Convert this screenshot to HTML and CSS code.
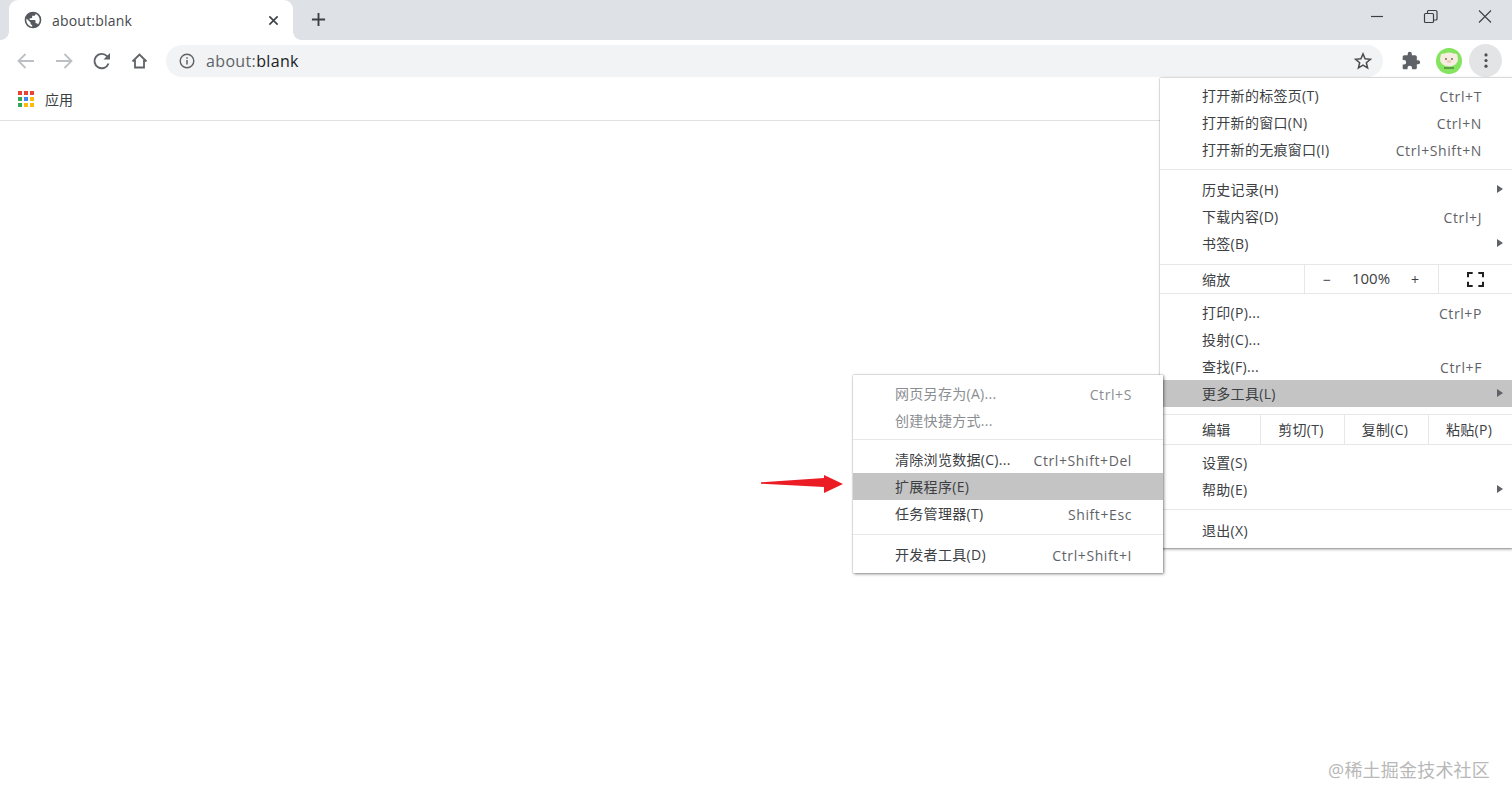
FILE: index.html
```html
<!DOCTYPE html>
<html lang="zh">
<head>
<meta charset="utf-8">
<title>about:blank</title>
<link rel="stylesheet" href="styles.css">
</head>
<body>
<div class="browser">
  <header class="tabstrip">
    <div class="tab">
      <svg class="tab-globe" viewBox="0 0 24 24"><path fill="#55585c" d="M12 2a10 10 0 1 0 0 20 10 10 0 0 0 0-20zM4 12c0-.6.1-1.200.2-1.800L9 15v1c0 1.100.9 2 2 2v2c-3.900-.5-7-3.900-7-8zm13.900 5.400c-.3-.8-1-1.400-1.900-1.400h-1v-3c0-.6-.4-1-1-1H8v-2h2c.6 0 1-.4 1-1V7h2c1.100 0 2-.9 2-2v-.4c2.900 1.200 5 4.100 5 7.400 0 2.100-.8 4-2.100 5.400z"/></svg>
      <span class="tab-title">about:blank</span>
      <svg class="tab-close" viewBox="0 0 12 12"><path d="M1.500 1.500l9 9M10.500 1.500l-9 9" stroke="#3c4043" stroke-width="1.700" fill="none"/></svg>
    </div>
    <svg class="newtab" viewBox="0 0 16 16"><path d="M8 1v14M1 8h14" stroke="#3c4043" stroke-width="2" fill="none"/></svg>
    <div class="winctl">
      <svg class="winbtn" viewBox="0 0 54 32"><path d="M21 16.500h12" stroke="#3c4043" stroke-width="1.200"/></svg>
      <svg class="winbtn" viewBox="0 0 54 32"><path d="M21.500 13.500h7a1 1 0 0 1 1 1v7a1 1 0 0 1-1 1h-7a1 1 0 0 1-1-1v-7a1 1 0 0 1 1-1zM23.500 13.500v-2a1 1 0 0 1 1-1h7a1.500 1.500 0 0 1 1.500 1.500v7a1 1 0 0 1-1 1h-2.500" stroke="#3c4043" stroke-width="1.200" fill="none"/></svg>
      <svg class="winbtn" viewBox="0 0 54 32"><path d="M21 10.500l12 12M33 10.500l-12 12" stroke="#3c4043" stroke-width="1.100" fill="none"/></svg>
    </div>
  </header>

  <div class="toolbar">
    <svg class="navicon nav-first" viewBox="0 0 24 24"><path d="M20 12H5M11.500 5L4.500 12l7 7" stroke="#bcc0c4" stroke-width="1.800" fill="none"/></svg>
    <svg class="navicon" viewBox="0 0 24 24"><path d="M4 12h15M12.500 5l7 7-7 7" stroke="#bcc0c4" stroke-width="1.800" fill="none"/></svg>
    <svg class="navicon" viewBox="0 0 24 24"><path d="M18.500 14.500A7.200 7.200 0 1 1 17 7.200L19 9.300" stroke="#5f6368" stroke-width="1.900" fill="none"/><path d="M20 4v6.500h-6.500z" fill="#5f6368"/></svg>
    <svg class="navicon" viewBox="0 0 24 24"><path d="M4.500 12.500L11.500 5.500l7 7M7 11v7.500h9V11" stroke="#5f6368" stroke-width="1.800" fill="none"/></svg>
    <div class="omnibox">
      <svg class="info" viewBox="0 0 16 16"><circle cx="8" cy="8" r="6.800" stroke="#5f6368" stroke-width="1.400" fill="none"/><path d="M8 7v4.500M8 4.300v1.500" stroke="#5f6368" stroke-width="1.500"/></svg>
      <span class="url"><span class="url-scheme">about:</span>blank</span>
      <svg class="star" viewBox="0 0 24 24"><path d="M12 3.500l2.500 5.900 6.400.5-4.900 4.200 1.500 6.200-5.500-3.300-5.500 3.300 1.500-6.200-4.900-4.200 6.400-.5z" stroke="#4a4d51" stroke-width="1.800" fill="none"/></svg>
    </div>
    <svg class="puzzle" viewBox="0 0 24 24"><path fill="#5f6368" d="M20.500 11H19V7c0-1.100-.9-2-2-2h-4V3.500a2.500 2.500 0 0 0-5 0V5H4c-1.100 0-2 .9-2 2v3.800h1.500a2.700 2.700 0 0 1 0 5.400H2V20c0 1.100.9 2 2 2h3.800v-1.500a2.700 2.700 0 0 1 5.400 0V22H17c1.100 0 2-.9 2-2v-4h1.500a2.500 2.500 0 0 0 0-5z"/></svg>
    <svg class="avatar" viewBox="0 0 26 26"><circle cx="13" cy="13" r="13" fill="#84e35f"/><ellipse cx="13" cy="11.500" rx="9" ry="7" fill="#f7ece0"/><circle cx="7" cy="8" r="2.500" fill="#f7ece0"/><circle cx="19" cy="8" r="2.500" fill="#f7ece0"/><circle cx="10" cy="11" r=".9" fill="#6d5d4d"/><circle cx="16" cy="11" r=".9" fill="#6d5d4d"/><ellipse cx="13" cy="13.500" rx="2.200" ry="1.300" fill="#f0c4b4"/><rect x="8" y="19" width="10" height="2" fill="#5d9e45"/></svg>
    <div class="menubtn">
      <svg class="dots" viewBox="0 0 4 16"><circle cx="2" cy="2" r="1.700"/><circle cx="2" cy="8" r="1.700"/><circle cx="2" cy="14" r="1.700"/></svg>
    </div>
  </div>

  <div class="bookmarks">
    <svg class="apps" viewBox="0 0 16 16">
      <rect x="0" y="0" width="4" height="4" fill="#ea4335"/><rect x="6" y="0" width="4" height="4" fill="#ea4335"/><rect x="12" y="0" width="4" height="4" fill="#ea4335"/>
      <rect x="0" y="6" width="4" height="4" fill="#34a853"/><rect x="6" y="6" width="4" height="4" fill="#4285f4"/><rect x="12" y="6" width="4" height="4" fill="#fbbc05"/>
      <rect x="0" y="12" width="4" height="4" fill="#34a853"/><rect x="6" y="12" width="4" height="4" fill="#fbbc05"/><rect x="12" y="12" width="4" height="4" fill="#fbbc05"/>
    </svg>
    <span class="bm-label">应用</span>
  </div>

  <main class="content"></main>
</div>

<nav class="menu menu-main">
  <div class="item"><span>打开新的标签页(T)</span><span class="key">Ctrl+T</span></div>
  <div class="item"><span>打开新的窗口(N)</span><span class="key">Ctrl+N</span></div>
  <div class="item"><span>打开新的无痕窗口(I)</span><span class="key">Ctrl+Shift+N</span></div>
  <hr class="sep sep-a">
  <div class="item sub"><span>历史记录(H)</span></div>
  <div class="item"><span>下载内容(D)</span><span class="key">Ctrl+J</span></div>
  <div class="item sub"><span>书签(B)</span></div>
  <div class="zoomrow">
    <span class="cell-label">缩放</span>
    <div class="zoomctl"><span class="zbtn">−</span><span class="zval">100%</span><span class="zbtn">+</span></div>
    <div class="fullscreen"><svg viewBox="0 0 18 16"><path d="M1 5.500V1h5M12 1h5v4.500M17 10.500V15h-5M6 15H1v-4.500" stroke="#202124" stroke-width="2.200" fill="none"/></svg></div>
  </div>
  <div class="item after-zoom"><span>打印(P)...</span><span class="key">Ctrl+P</span></div>
  <div class="item"><span>投射(C)...</span></div>
  <div class="item"><span>查找(F)...</span><span class="key">Ctrl+F</span></div>
  <div class="item sub active"><span>更多工具(L)</span></div>
  <div class="editrow">
    <span class="cell-label">编辑</span>
    <span class="ecell">剪切(T)</span>
    <span class="ecell">复制(C)</span>
    <span class="ecell">粘贴(P)</span>
  </div>
  <div class="item after-edit"><span>设置(S)</span></div>
  <div class="item sub"><span>帮助(E)</span></div>
  <hr class="sep sep-b">
  <div class="item"><span>退出(X)</span></div>
</nav>

<nav class="menu menu-sub">
  <div class="item disabled"><span>网页另存为(A)...</span><span class="key">Ctrl+S</span></div>
  <div class="item disabled"><span>创建快捷方式...</span></div>
  <hr class="sep sep-c">
  <div class="item"><span>清除浏览数据(C)...</span><span class="key">Ctrl+Shift+Del</span></div>
  <div class="item active"><span>扩展程序(E)</span></div>
  <div class="item"><span>任务管理器(T)</span><span class="key">Shift+Esc</span></div>
  <hr class="sep sep-d">
  <div class="item"><span>开发者工具(D)</span><span class="key">Ctrl+Shift+I</span></div>
</nav>

<svg class="redarrow" viewBox="0 0 84 20"><path d="M0 8.200L63 4 63 1 82 10 63 19 63 13 0 9.800z" fill="#ec1c24"/></svg>
<div class="watermark">@稀土掘金技术社区</div>
</body>
</html>
```

FILE: styles.css
```css
* { box-sizing: border-box; }
html, body { margin: 0; height: 100%; background: #fff; overflow: hidden; }
body {
  font-family: "Open Sans", "Noto Sans CJK SC", sans-serif;
  font-size: 14px;
  color: #3c4043;
}
svg { display: block; flex: none; }

.browser { display: flex; flex-direction: column; height: 803px; }

.tabstrip {
  height: 40px;
  flex: none;
  background: #dee1e6;
  display: flex;
  align-items: center;
  padding-left: 9px;
}
.tab {
  position: relative;
  width: 284px;
  height: 40px;
  background: #fff;
  border-radius: 9px 9px 0 0;
  display: flex;
  align-items: center;
  padding: 0 14px 0 14px;
}
.tab::before, .tab::after {
  content: "";
  position: absolute;
  bottom: 0;
  width: 8px;
  height: 8px;
}
.tab::before { left: -8px; background: radial-gradient(circle at 0 0, transparent 7.500px, #fff 8px); }
.tab::after { right: -8px; background: radial-gradient(circle at 100% 0, transparent 7.500px, #fff 8px); }
.tab-globe { width: 20px; height: 20px; margin-right: 9px; }
.tab-title { flex: 1; font-size: 14px; color: #45494d; letter-spacing: .2px; }
.tab-close { width: 11px; height: 11px; }
.newtab { width: 15px; height: 15px; margin: -2px 0 0 18px; }
.winctl { margin-left: auto; display: flex; align-self: flex-start; }
.winbtn { width: 54px; height: 32px; }

.toolbar {
  height: 41px;
  flex: none;
  background: #fff;
  display: flex;
  align-items: center;
  padding: 0 10px 0 14px;
}
.navicon { width: 24px; height: 24px; margin-right: 14px; }
.nav-first { margin-right: 14px; }
.omnibox {
  width: 1219px;
  height: 32px;
  margin: 1px 0 0 0;
  border-radius: 16px;
  background: #f1f3f4;
  display: flex;
  align-items: center;
  padding: 0 10px 0 13px;
}
.info { width: 16px; height: 16px; margin-right: 11px; }
.url { flex: 1; font-size: 16px; color: #202124; letter-spacing: .35px; }
.url-scheme { color: #5f6368; }
.star { width: 20px; height: 20px; }
.puzzle { width: 20px; height: 20px; margin-left: 18px; }
.avatar { width: 26px; height: 26px; margin-left: 15px; }
.menubtn {
  width: 33px;
  height: 33px;
  margin-left: 7px;
  border-radius: 50%;
  background: #e3e4e5;
  display: flex;
  align-items: center;
  justify-content: center;
}
.dots { width: 4px; height: 15px; fill: #4a4d51; }

.bookmarks {
  height: 40px;
  flex: none;
  background: #fff;
  border-bottom: 1px solid #dfe1e5;
  display: flex;
  align-items: center;
  padding: 0 0 0 18px;
}
.apps { width: 16px; height: 16px; margin-top: -4px; }
.bm-label { margin: -3px 0 0 11px; font-size: 14px; color: #3c4043; }

.content { flex: 1; background: #fff; }

.menu {
  position: absolute;
  background: #fff;
  color: #3c4043;
  font-size: 14px;
  letter-spacing: .3px;
  box-shadow: 0 0 1px rgba(0,0,0,.45), 1px 1px 3px rgba(0,0,0,.45);
}
.menu-main { left: 1160px; top: 78px; width: 352px; height: 470px; padding-top: 4px; }
.menu-sub { left: 853px; top: 375px; width: 310px; height: 198px; padding-top: 5px; z-index: 2; }

.item {
  height: 27px;
  display: flex;
  align-items: center;
  justify-content: space-between;
  padding: 0 30px 2px 42px;
  position: relative;
  white-space: nowrap;
}
.key { color: #5f6368; letter-spacing: .6px; margin-top: 3px; }
.menu-sub .item { padding-right: 31px; }
.item.active { background: #c4c4c4; }
.item.disabled, .item.disabled .key { color: #8a8d91; }
.item.sub::after {
  content: "";
  position: absolute;
  right: 9px;
  top: 9px;
  border-left: 6px solid #5f6368;
  border-top: 4.500px solid transparent;
  border-bottom: 4.500px solid transparent;
}

.sep { border: 0; border-top: 1px solid #e6e7e8; margin: 0; }
.sep-a { margin: 6px 0 6px; }
.sep-b { margin: 6px 0 7px; }
.sep-c { margin: 5px 0 6px; }
.sep-d { margin: 7px 0 6px; }

.zoomrow, .editrow {
  display: grid;
  align-items: stretch;
  border-top: 1px solid #e6e7e8;
  border-bottom: 1px solid #e6e7e8;
}
.zoomrow { height: 30px; margin-top: 7px; grid-template-columns: 144px 135px 73px; }
.editrow { height: 31px; margin-top: 7px; grid-template-columns: 100px 84px 84px 84px; }
.cell-label { padding-left: 42px; display: flex; align-items: center; }
.editrow .cell-label, .ecell { padding-bottom: 2px; }
.zoomctl {
  border-left: 1px solid #e6e7e8;
  border-right: 1px solid #e6e7e8;
  display: flex;
  align-items: center;
  justify-content: space-between;
  padding: 0 17px 0 16px;
  letter-spacing: 0;
}
.zbtn { font-size: 14px; width: 12px; text-align: center; }
.zval { font-size: 15px; margin-top: -2px; }
.fullscreen { display: flex; align-items: center; justify-content: center; }
.fullscreen svg { width: 17px; height: 15px; }
.ecell {
  border-left: 1px solid #e6e7e8;
  display: flex;
  align-items: center;
  justify-content: center;
  padding-right: 3px;
}
.after-zoom { margin-top: 5px; }
.after-edit { margin-top: 4px; }

.redarrow { position: absolute; left: 761px; top: 474px; width: 84px; height: 20px; }

.watermark {
  position: absolute;
  right: 22px;
  top: 757px;
  font-size: 18px;
  line-height: 27px;
  letter-spacing: .2px;
  color: #b8b8b8;
  white-space: nowrap;
}
```
